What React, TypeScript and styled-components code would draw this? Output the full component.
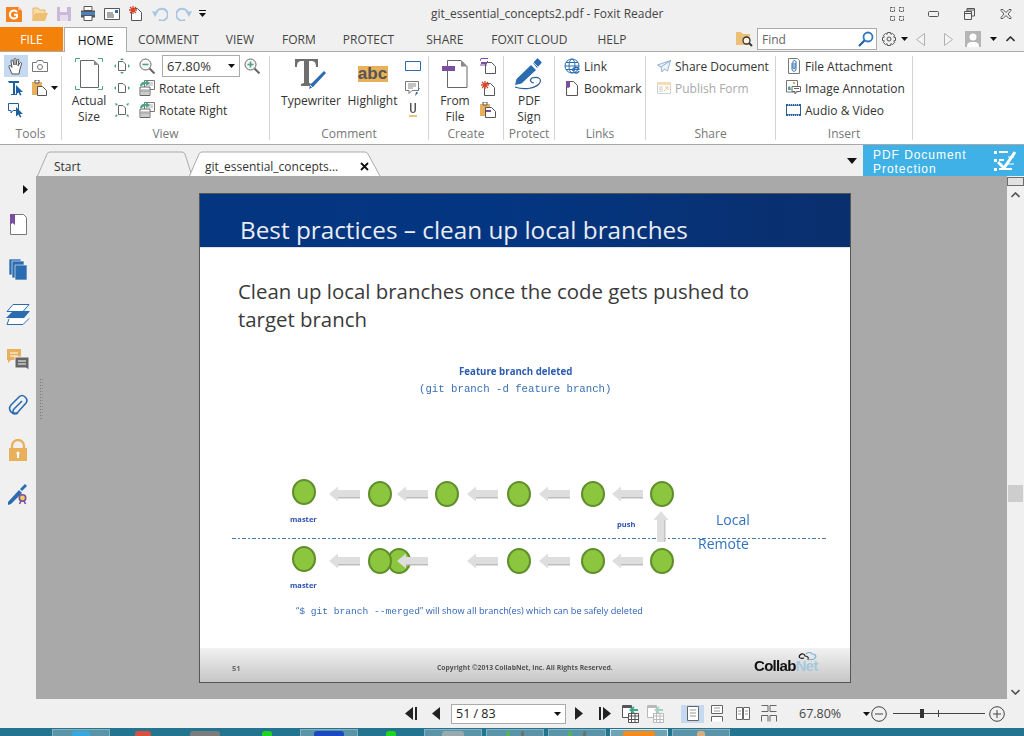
import React from "react";
import styled, { createGlobalStyle } from "styled-components";

const Global = createGlobalStyle`
  html, body { margin: 0; padding: 0; width: 1024px; height: 736px; overflow: hidden; background: #f0f0f0; }
  * { box-sizing: border-box; }
`;

const UI = `"Open Sans", "Noto Sans", sans-serif`;

const Shell = styled.div`
  width: 1024px; height: 736px; display: flex; flex-direction: column; overflow: hidden;
  background: #f0f0f0; font-family: ${UI}; font-size: 12px; color: #333;
`;
const Ico = styled.svg`display: block; flex-shrink: 0;`;
const Slot = styled.div<{ $ml?: number; $mr?: number }>`
  flex-shrink: 0; display: flex; align-items: center; margin-left: ${p => p.$ml ?? 0}px; margin-right: ${p => p.$mr ?? 0}px;
`;

/* title bar */
const TitleBar = styled.div`height: 27px; display: flex; align-items: center; padding-left: 6px; position: relative;`;
const TitleText = styled.div`
  position: absolute; left: 431px; top: 5px; font-size: 12px; line-height: 17px; color: #444; white-space: nowrap;
`;

/* menu */
const MenuBar = styled.div`height: 25px; display: flex; align-items: stretch; border-bottom: 1px solid #ababab;`;
const FileTab = styled.div`
  width: 63px; height: 24px; background: #f4820a; color: #fff; display: flex; align-items: center; justify-content: center;
  font-size: 12px;
`;
const HomeTab = styled.div`
  width: 63px; height: 25px; margin-left: 1px; background: #fff; border: 1px solid #ababab; border-bottom: none;
  display: flex; align-items: center; justify-content: center; color: #111; font-size: 12px; position: relative; z-index: 1;
`;
const MenuItem = styled.div<{ $ml: number }>`
  margin-left: ${p => p.$ml}px; display: flex; align-items: center; font-size: 12px; color: #444; white-space: nowrap;
`;
const MenuRight = styled.div`margin-left: auto; display: flex; align-items: center; height: 24px;`;
const FindBox = styled.div`
  width: 120px; height: 22px; border: 1px solid #ababab; background: #fff; margin-left: 4px; flex-shrink: 0;
  display: flex; align-items: center; justify-content: space-between; padding: 0 2px 0 4px; color: #666; font-size: 12px;
`;

/* ribbon */
const Ribbon = styled.div`height: 93px; background: #fff; display: flex; border-bottom: 1px solid #a8a8a8;`;
const Group = styled.section<{ $w: number }>`
  width: ${p => p.$w}px; height: 84px; margin-top: 4px; border-right: 1px solid #d4d4d4; display: flex; flex-direction: column; flex-shrink: 0;
`;
const GroupBody = styled.div<{ $pl?: number }>`
  height: 66px; margin-top: -1px; display: flex; flex-shrink: 0; padding-left: ${p => p.$pl ?? 0}px;
`;
const GroupLabel = styled.div`
  margin-top: 5px; line-height: 16px; height: 16px; flex-shrink: 0; text-align: center; color: #777; font-size: 12px;
`;
const Large = styled.div<{ $w: number; $ml?: number }>`
  width: ${p => p.$w}px; margin-left: ${p => p.$ml ?? 0}px; flex-shrink: 0; display: flex; flex-direction: column; align-items: center;
`;
const LargeIcon = styled.div`height: 38px; flex-shrink: 0; display: flex; align-items: center; justify-content: center;`;
const LargeText = styled.div`line-height: 16px; flex-shrink: 0; text-align: center; white-space: nowrap; color: #333;`;
const Col = styled.div<{ $ml?: number }>`
  display: flex; flex-direction: column; margin-left: ${p => p.$ml ?? 0}px; flex-shrink: 0;
`;
const Row = styled.div<{ $muted?: boolean }>`
  height: 22px; display: flex; align-items: center; gap: 4px; white-space: nowrap; color: ${p => (p.$muted ? "#a8a8a8" : "#333")};
`;
const ToolGrid = styled.div`
  display: grid; grid-template-columns: 24px 28px; grid-auto-rows: 22px; margin-left: 4px; gap: 0 4px;
`;
const ToolCell = styled.div<{ $on?: boolean; $left?: boolean }>`
  display: flex; align-items: center; justify-content: ${p => (p.$left ? "flex-start" : "center")};
  background: ${p => (p.$on ? "#c5d9f1" : "transparent")};
`;
const Combo = styled.div`
  width: 78px; height: 22px; border: 1px solid #ababab; display: flex; align-items: center; flex-shrink: 0;
  justify-content: space-between; padding: 0 4px 0 4px; font-size: 13px; color: #333;
`;

/* tab bar */
const TabBar = styled.div`height: 31px; display: flex; align-items: stretch; padding-left: 37px; overflow: hidden;`;
const DocTab = styled.div<{ $w: number; $ml?: number }>`
  width: ${p => p.$w}px; margin-left: ${p => p.$ml ?? 0}px; position: relative; flex-shrink: 0;
`;
const TabShape = styled.svg`position: absolute; left: 0; top: 0;`;
const TabLabel = styled.div<{ $l: number; $track?: number }>`
  position: absolute; left: ${p => p.$l}px; top: 13px; line-height: 17px; color: #333; white-space: nowrap; font-size: 12px;
  letter-spacing: ${p => p.$track ?? 0}px;
`;
const TabClose = styled.div`position: absolute; right: 10px; top: 17px;`;
const PromoBox = styled.div`
  width: 161px; flex-shrink: 0; background: #3fb1e7; color: #fff; padding: 2px 8px 0 10px; display: flex; justify-content: space-between;
  align-items: center; font-family: "Liberation Sans", sans-serif; font-size: 12px; line-height: 14px; letter-spacing: .95px;
`;

/* main */
const Main = styled.div`height: 523px; display: flex;`;
const Rail = styled.div`width: 36px; display: flex; flex-direction: column; align-items: center; flex-shrink: 0;`;
const RailCaret = styled.div`height: 26px; width: 100%; display: flex; justify-content: flex-end; align-items: center; padding: 0 8px 0 0;`;
const RailItem = styled.div`
  height: 45px; width: 100%; display: flex; align-items: center; justify-content: center;
`;
const Viewer = styled.div`flex: 1; background: #a9a9a9; padding: 17px 0 0 163px; position: relative;`;
const Grip = styled.div`
  position: absolute; left: 3px; top: 202px; width: 4px; height: 42px;
  background-image: radial-gradient(#6d6d6d 0.7px, transparent 0.8px); background-size: 2.7px 3px;
`;
const ScrollBar = styled.div`width: 17px; background: #f0f0f0; flex-shrink: 0; display: flex; flex-direction: column; align-items: center; position: relative;`;
const ScrollTop = styled.div`width: 17px; height: 9px; margin-top: 1px; background: #e2e2e2; border: 1px solid #6c6c6c;`;
const ScrollUp = styled.div`margin-top: 6px;`;
const ScrollThumb = styled.div`position: absolute; top: 309px; left: 1px; width: 15px; height: 17px; background: #cdcdcd;`;
const ScrollDown = styled.div`position: absolute; top: 513px; left: 4px;`;

/* page */
const Page = styled.div`
  width: 652px; height: 490px; background: #fff; border: 1px solid #555;
  display: flex; flex-direction: column; position: relative; font-family: "Open Sans", "Noto Sans", sans-serif;
`;
const SlideHead = styled.div`
  height: 54px; flex-shrink: 0; background: linear-gradient(90deg, #04357f 0%, #033682 45%, #0a2f6d 100%); color: #e9edf3;
  display: flex; align-items: flex-end; padding: 0 0 1px 40px; font-size: 24.3px; line-height: 33px; white-space: nowrap;
  border-bottom: 1px solid #dfe3ea;
`;
const SlideBody = styled.div`
  padding: 29px 0 0 38px; font-size: 20.4px; line-height: 28px; color: #3a3a3a; width: 580px;
`;
const Canvas = styled.div`position: absolute; left: -1px; top: -1px; width: 652px; height: 490px; filter: blur(0.3px);`;
const Spot = styled.div<{ $x: number; $y: number }>`
  position: absolute; left: ${p => p.$x}px; top: ${p => p.$y}px; white-space: nowrap;
`;
const Caption = styled(Spot)`color: #2c5cb0; font-weight: 700; font-size: 9.7px; line-height: 12px;`;
const MonoCaption = styled(Spot)`color: #3a6fb5; font-family: "Liberation Mono", monospace; font-size: 10.7px; line-height: 12px;`;
const Small = styled(Spot)`color: #2c50b0; font-weight: 700; font-size: 7.5px; line-height: 10px;`;
const Side = styled(Spot)`color: #2f72bd; font-size: 14px; line-height: 18px;`;
const Note = styled(Spot)`color: #2f62b8; font-size: 9.15px; line-height: 12px;`;
const NoteMono = styled.span`font-family: "Liberation Mono", monospace; font-size: 9.6px; color: #3a6fb5;`;
const Node = styled.div<{ $x: number; $y: number }>`
  position: absolute; left: ${p => p.$x - 12}px; top: ${p => p.$y - 13}px; width: 24px; height: 26px; border-radius: 50%;
  background: #8cc63f; border: 2px solid #5f8f2a;
`;
const Dash = styled.div`
  position: absolute; left: 33px; top: 345px; width: 594px; height: 1px;
  background: repeating-linear-gradient(90deg, #4a77ad 0 4px, transparent 4px 6px, #4a77ad 6px 8px, transparent 8px 10px);
`;
const SlideFoot = styled.div`
  position: absolute; left: 0; right: 0; bottom: 0; height: 34px; background: linear-gradient(#f2f2f2, #c6c6c6);
`;
const FootNum = styled(Spot)`font-size: 7.5px; font-weight: 700; color: #666; line-height: 10px;`;
const FootCopy = styled(Spot)`font-size: 6.8px; font-weight: 700; color: #555; line-height: 10px;`;
const LogoText = styled(Spot)`font-family: "Liberation Sans", sans-serif; font-weight: 700; font-size: 15px; letter-spacing: -.7px; color: #111; line-height: 18px;`;
const LogoNet = styled.span`color: #a3c8df;`;

/* status */
const Status = styled.div`height: 29px; display: flex; align-items: center; padding-left: 405px;`;
const PageBox = styled.div`
  margin-left: 11px; width: 115px; height: 20px; border: 1px solid #ababab; background: #fff; display: flex;
  align-items: center; justify-content: space-between; padding: 0 4px 0 4px; font-size: 12.5px; color: #222; flex-shrink: 0;
`;
const ViewBtn = styled.div<{ $on?: boolean; $ml: number }>`
  width: 23px; height: 18px; margin-left: ${p => p.$ml}px; display: flex; align-items: center; justify-content: center;
  background: ${p => (p.$on ? "#c5d9f1" : "transparent")}; flex-shrink: 0;
`;
const ZoomValue = styled.div`margin-left: 19px; width: 64px; font-size: 12.5px; color: #444; flex-shrink: 0;`;
const Slider = styled.div`width: 92px; height: 1px; background: #444; margin-left: 6px; position: relative; flex-shrink: 0;`;
const SliderThumb = styled.div`position: absolute; left: 27px; top: -4px; width: 4px; height: 9px; background: #333;`;
const SliderTick = styled.div`position: absolute; left: 45px; top: -3px; width: 1px; height: 7px; background: #444;`;

/* taskbar */
const Taskbar = styled.div`
  height: 8px; background: #23748f; display: grid; grid-template-columns: repeat(11, 58px); column-gap: 4px; padding: 1px 0 0 52px; overflow: hidden;
`;
const TaskBtn = styled.div<{ $state?: "open" | "active" }>`
  height: 10px; position: relative; display: flex; justify-content: center; gap: 11px;
  background: ${p => (p.$state === "active" ? "#6fa2b3" : p.$state === "open" ? "#5b94a8" : "transparent")};
  border: 1px solid ${p => (p.$state === "active" ? "#d7e6ea" : p.$state === "open" ? "#86b2c0" : "transparent")};
`;
const TaskGlyph = styled.div<{ $c: string; $w: number }>`
  width: ${p => p.$w}px; height: 12px; margin-top: 1px; background: ${p => p.$c}; border-radius: 3px 3px 0 0;
`;

/* ---------- drawings ---------- */
const Caret = ({ c = "#111" }: { c?: string }) => (
  <Ico width="7" height="4" viewBox="0 0 7 4"><path d="M0 0h7L3.5 4z" fill={c} /></Ico>
);
const BLUE = "#2b6cb0";
const OR = "#e8b05a";
const PUR = "#7b4f9e";
const GR = "#555";
const PageOutline = ({ x = 0.5, y = 0.5, w, h, c = GR, fold = 4 }: any) => (
  <path d={`M${x} ${y}H${x + w - fold}L${x + w} ${y + fold}V${y + h}H${x}Z`} fill="#fff" stroke={c} />
);

const AppLogo = () => (
  <Ico width="17" height="16" viewBox="0 0 17 16">
    <path d="M0 1h12l4 4v11H0z" fill="#f3831f" />
    <path d="M12 0l4 4h-4z" fill="#f7b98a" />
    <path d="M11 6a4 4 0 1 0 0 5V8.8H8" fill="none" stroke="#fff" strokeWidth="2" />
  </Ico>
);
const Folder = () => (
  <Ico width="16" height="14" viewBox="0 0 16 14">
    <path d="M1 14V1h5l2 2h5v3" fill="#f6dca8" stroke="#e3b56a" />
    <path d="M0 14l3-8h13l-3 8z" fill="#efc06f" />
  </Ico>
);
const Floppy = () => (
  <Ico width="14" height="14" viewBox="0 0 14 14">
    <path d="M0 0h14v14H0z" fill="#cbb7d8" />
    <path d="M3 0h7v5H3z" fill="#f0f0f0" /><path d="M3 8h8v6H3z" fill="#e6dced" />
  </Ico>
);
const Printer = () => (
  <Ico width="16" height="15" viewBox="0 0 16 15">
    <path d="M4 .5h8v4H4z" fill="#fff" stroke={GR} />
    <path d="M1 4.5h14v7H1z" fill="#555" /><path d="M1 6h14v3H1z" fill="#4b82bd" />
    <path d="M4 9.5h8v5H4z" fill="#fff" stroke={GR} />
  </Ico>
);
const Mail = () => (
  <Ico width="16" height="12" viewBox="0 0 16 12">
    <path d="M.5.5h15v11H.5z" fill="#fff" stroke={GR} />
    <path d="M3 5h6M3 7h7M3 9h7" stroke={GR} /><path d="M11 2h3v3h-3z" fill={BLUE} />
  </Ico>
);
const NewDoc = () => (
  <Ico width="15" height="15" viewBox="0 0 15 15">
    <PageOutline x={3.5} y={2.5} w={10} h={12} />
    <path d="M5 0v8M1 4h8M2 1l6 6M8 1L2 7" stroke="#d9452b" strokeWidth="1.3" />
  </Ico>
);
const Undo = ({ flip }: { flip?: boolean }) => (
  <Ico width="16" height="14" viewBox="0 0 16 14">
    <g transform={flip ? "matrix(-1 0 0 1 16 0)" : undefined}>
      <path d="M4 6a6 6 0 1 1 3 7" fill="none" stroke="#a9c6e2" strokeWidth="2" />
      <path d="M0 4l6 1-3 5z" fill="#a9c6e2" />
    </g>
  </Ico>
);
const QatMore = () => (
  <Ico width="7" height="7" viewBox="0 0 7 7"><path d="M0 0h7v1H0z" fill="#111" /><path d="M0 3h7L3.5 7z" fill="#111" /></Ico>
);
const WinGrid = () => (
  <Ico width="14" height="14" viewBox="0 0 14 14" fill="none" stroke="#555">
    <path d="M.5.5h4v4h-4zM9.500.5h4v4h-4zM.5 9.500h4v4h-4zM9.500 9.500h4v4h-4z" strokeDasharray="2 1" />
  </Ico>
);
const WinMin = () => <Ico width="11" height="6" viewBox="0 0 11 6"><rect x=".5" y=".5" width="10" height="5" rx="1" fill="none" stroke="#555" /></Ico>;
const WinMax = () => (
  <Ico width="11" height="12" viewBox="0 0 11 12" fill="none" stroke="#555">
    <path d="M3 3V.5h7.5V8H8" /><path d="M.5 3.5h7v8h-7z" /><path d="M.5 5.5h7M3 2h7" />
  </Ico>
);
const WinClose = () => (
  <Ico width="12" height="10" viewBox="0 0 12 10" fill="none" stroke="#555">
    <path d="M1 .5h2l3 3 3-3h2v1l-3 3.5 3 3.5v1H9l-3-3-3 3H1v-1l3-3.5-3-3.5z" />
  </Ico>
);
const FolderFind = () => (
  <Ico width="17" height="15" viewBox="0 0 17 15">
    <path d="M0 13V0h5l2 2h7v11z" fill="#edc077" />
    <circle cx="10.5" cy="8.5" r="3.5" fill="#fdf3df" stroke="#333" strokeWidth="1.3" />
    <path d="M13 11l3 3" stroke="#333" strokeWidth="1.8" />
  </Ico>
);
const FindGlass = () => (
  <Ico width="17" height="16" viewBox="0 0 17 16" fill="none">
    <circle cx="11" cy="6" r="4.5" stroke="#2f78bd" strokeWidth="1.8" />
    <path d="M7.5 9.5L2 15" stroke="#1f5f9e" strokeWidth="2.2" />
  </Ico>
);
const Gear = () => (
  <Ico width="14" height="14" viewBox="0 0 14 14" fill="none" stroke="#555">
    <circle cx="7" cy="7" r="2" />
    <path d="M5.5.5h3l.4 1.8 1.6-.9 2.1 2.1-.9 1.6 1.8.4v3l-1.8.4.9 1.6-2.1 2.1-1.6-.9-.4 1.8h-3l-.4-1.8-1.6.9L1.400 10.500l.9-1.600L.5 8.500v-3l1.800-.4-.9-1.600L3.500 1.400l1.600.9z" />
  </Ico>
);
const OutlineArrow = ({ right }: { right?: boolean }) => (
  <Ico width="9" height="13" viewBox="0 0 9 13">
    <path d={right ? "M.5.5l8 6-8 6z" : "M8.500.5l-8 6 8 6z"} fill="#f4f4f4" stroke="#b0b0b0" />
  </Ico>
);
const Avatar = () => (
  <Ico width="16" height="16" viewBox="0 0 16 16">
    <path d="M0 0h16v16H0z" fill="#b5b5b5" />
    <circle cx="8" cy="6" r="3.500" fill="#fff" /><path d="M2 16c0-5 3-5 6-5s6 0 6 5z" fill="#fff" />
  </Ico>
);
const ChevUp = ({ c = "#333", down }: { c?: string; down?: boolean }) => (
  <Ico width="9" height="6" viewBox="0 0 9 6">
    <path d={down ? "M.5 1l4 4 4-4" : "M.5 5l4-4 4 4"} fill="none" stroke={c} strokeWidth="1.600" />
  </Ico>
);
const Hand = () => (
  <Ico width="16" height="17" viewBox="0 0 16 17">
    <path d="M4 16L1 9c-.6-1.600 1-2 2-1l1 1.500L3 3c0-1.400 1.800-1.400 2 0l1 4V1.500c0-1.400 2-1.400 2 0V7l1-5c.3-1.300 2-1 1.800.3L10 8l1.800-3c.7-1.100 2.200-.4 1.700.9L12 11l-1 5z" fill="#fff" stroke="#555" />
  </Ico>
);
const Camera = () => (
  <Ico width="16" height="12" viewBox="0 0 16 12" fill="#fff" stroke="#777">
    <path d="M.5 2.500h4l1-2h5l1 2h4v9H.500z" /><circle cx="8" cy="7" r="2.500" />
  </Ico>
);
const ArrowTip = ({ x, y }: { x: number; y: number }) => (
  <path d={`M${x} ${y}l7 7h-3l1.500 3-1.500 .5-1.500-3-2.500 2z`} fill="#1f5f9e" />
);
const SelText = () => (
  <Ico width="16" height="16" viewBox="0 0 16 16">
    <path d="M0 1h11v2H7v11h2v1H3v-1h2V3H1z" fill="#1f5f9e" /><ArrowTip x={8} y={5} />
  </Ico>
);
const Clipboard = () => (
  <Ico width="16" height="16" viewBox="0 0 16 16">
    <path d="M0 2h10v13H0z" fill={OR} /><path d="M3 0h4v3H3z" fill="#fff" stroke={GR} />
    <PageOutline x={5.500} y={6.500} w={9} h={9} />
  </Ico>
);
const SelNote = () => (
  <Ico width="16" height="15" viewBox="0 0 16 15">
    <path d="M.5.500h10v7H5L3 10V7.500H.5z" fill="#fff" stroke="#1f5f9e" /><ArrowTip x={8} y={4} />
  </Ico>
);
const ActualSize = () => (
  <Ico width="28" height="32" viewBox="0 0 28 32">
    <path d="M.5 4V.5H5M23 .5h4.500V4M.5 28v3.500H5M23 31.500h4.500V28" fill="none" stroke="#4ca58a" />
    <path d="M5.500 2.500H19l4.500 4.500v22.500h-18z" fill="#fff" stroke="#666" />
    <path d="M19 2.500l4.500 4.500H19z" fill="#888" />
  </Ico>
);
const FitIcon = ({ kind }: { kind: number }) => (
  <Ico width="16" height="16" viewBox="0 0 16 16">
    <path d="M4.500 3.500H9l2.500 2.500v6.500h-7z" fill="#fff" stroke="#666" />
    {kind === 0 && <path d="M8 0l2 2H6zM8 16l-2-2h4zM0 8l2-2v4zM16 8l-2 2V6z" fill="#4ca58a" />}
    {kind === 1 && <path d="M0 8l2-2v4zM16 8l-2 2V6z" fill="#4ca58a" />}
    {kind === 2 && <path d="M1 1l3 1-2 2zM15 1l-1 3-2-2zM1 15l1-3 2 2zM15 15l-3-1 2-2z" fill="#4ca58a" />}
  </Ico>
);
const Magnify = ({ plus }: { plus?: boolean }) => (
  <Ico width="17" height="16" viewBox="0 0 17 16">
    <circle cx="6.500" cy="6.500" r="5.500" fill="#f7f7f7" stroke="#666" />
    <path d="M10.500 10.500l5 5" stroke="#666" strokeWidth="2" />
    <path d="M3.500 6.500h6" stroke="#4ca58a" strokeWidth="1.600" />
    {plus && <path d="M6.500 3.500v6" stroke="#4ca58a" strokeWidth="1.600" />}
  </Ico>
);
const Rotate = () => (
  <Ico width="16" height="16" viewBox="0 0 16 16">
    <path d="M5.500.5h10v9h-10z" fill="#fff" stroke="#777" />
    <path d="M7 3h7M7 5h7" stroke="#aaa" />
    <path d="M1 7h10v8.500H1z" fill="#fff" stroke="#666" />
    <path d="M3 9v6M5 9v6M7 9v6M9 9v6M1 11h10" stroke="#999" />
    <path d="M1 6c0-3 3-5 6-4V0l4 3-4 3V4C5 4 3.500 5 3 6z" fill="#4ca58a" />
  </Ico>
);
const Typewriter = () => (
  <Ico width="32" height="32" viewBox="0 0 32 32">
    <path d="M0 1h23v8h-2c0-4-1-6-5-6h-2v22l3 1v2H6v-2l3-1V3H7C3 3 2 5 2 9H0z" fill="#6e6e6e" />
    <path d="M29 13l2 2-13 14-4 2 1-4z" fill={BLUE} />
    <path d="M15 27l3 3" stroke="#fff" />
  </Ico>
);
const HighlightIcon = styled.div`
  width: 30px; height: 16px; background: ${OR}; color: #555; font-family: "Liberation Sans", sans-serif; font-weight: 700;
  font-size: 17px; line-height: 15px; text-align: center;
`;
const RectIcon = () => <Ico width="16" height="11" viewBox="0 0 16 11"><path d="M.5.500h15v9H.500z" fill="#fff" stroke={BLUE} /></Ico>;
const NotePin = () => (
  <Ico width="16" height="15" viewBox="0 0 16 15">
    <path d="M.5.500h13v9H7l-3 3v-3H.500z" fill="#fff" stroke="#777" />
    <path d="M3 3h8M3 5h8M3 7h5" stroke="#888" />
    <path d="M15 7l-3 4 1 1-3 3 1-4 1 0 2-4z" fill={BLUE} />
  </Ico>
);
const Underline = () => (
  <Ico width="10" height="14" viewBox="0 0 10 14">
    <path d="M2 0h1.500v7c0 2.500 3 2.500 3 0V0H8v7c0 4-6 4-6 0z" fill="#555" /><path d="M1 13h8" stroke={OR} strokeWidth="1.500" />
  </Ico>
);
const FromFile = () => (
  <Ico width="26" height="28" viewBox="0 0 26 28">
    <path d="M5.500.5H19l6 6v21H5.500z" fill="#fff" stroke="#666" /><path d="M19 .5l6 6h-6z" fill="#888" />
    <path d="M0 6h13v5H0z" fill={PUR} />
  </Ico>
);
const CreateA = () => (
  <Ico width="16" height="16" viewBox="0 0 16 16">
    <PageOutline x={5.500} y={4.500} w={10} h={11} />
    <path d="M1 .5h7M0 7h7" stroke={PUR} /><path d="M1 4h6v2H1z" fill={PUR} /><path d="M1 .5L0 3M7 3l1 1" stroke={PUR} />
  </Ico>
);
const CreateB = () => (
  <Ico width="15" height="15" viewBox="0 0 15 15">
    <PageOutline x={4.500} y={2.500} w={10} h={12} />
    <path d="M5 0v8M1 4h8M2 1l6 6M8 1L2 7" stroke="#d9452b" strokeWidth="1.300" />
  </Ico>
);
const CreateC = () => (
  <Ico width="16" height="16" viewBox="0 0 16 16">
    <path d="M0 2h10v12H0z" fill={OR} /><path d="M3 0h4v3H3z" fill="#fff" stroke={GR} />
    <PageOutline x={5.500} y={5.500} w={10} h={10} />
    <path d="M6 9h5" stroke={PUR} strokeWidth="2" />
  </Ico>
);
const PdfSign = () => (
  <Ico width="30" height="32" viewBox="0 0 30 32">
    <path d="M1 27l1.500-6L17 7l5 5L7.500 25.500z" fill={BLUE} />
    <path d="M19 5l4-4.500 1 0 3.500 3.500 0 1L23 10z" fill={BLUE} />
    <path d="M19 4l5 5" stroke="#fff" strokeWidth=".8" />
    <path d="M1 29c8 3 19 2 24-3 4-5-1-8-7-6-3 2-1 5 2 5" fill="none" stroke="#2b5f93" strokeWidth="1.200" />
  </Ico>
);
const Globe = () => (
  <Ico width="16" height="16" viewBox="0 0 16 16" fill="none" stroke={BLUE}>
    <circle cx="8" cy="8" r="7" fill="#fff" /><ellipse cx="8" cy="8" rx="3" ry="7" />
    <path d="M1 8h14M2 4.500h12M2 11.500h12" />
    <path d="M9 13a3 3 0 0 1 6-1M15 13a3 3 0 0 1-5 1" strokeWidth="1.500" />
  </Ico>
);
const Bookmark = () => (
  <Ico width="12" height="15" viewBox="0 0 12 15">
    <PageOutline x={.5} y={.5} w={11} h={14} />
    <path d="M0 0h4v6l-2 1-2-1z" fill={PUR} />
  </Ico>
);
const Send = () => (
  <Ico width="14" height="13" viewBox="0 0 14 13" fill="#eef3f8" stroke="#8fb1d3">
    <path d="M13.500.5L.5 5l3.500 2 1 5 2.500-3 3 2z" /><path d="M13.500.5L4 7" />
  </Ico>
);
const Publish = () => (
  <Ico width="14" height="12" viewBox="0 0 14 12">
    <path d="M.5.5h13v11H.500z" fill="#fff" stroke="#cfcfcf" /><path d="M0 0h14v3H0z" fill="#f3dcb9" />
    <path d="M2 5h4M2 7h4M2 9h4" stroke="#ccc" /><path d="M7 9l4-4m0 0H8m3 0v3" stroke="#f0c79a" />
  </Ico>
);
const Clip = () => (
  <Ico width="12" height="16" viewBox="0 0 12 16">
    <PageOutline x={.5} y={.5} w={11} h={15} c="#777" fold={2} />
    <path d="M4 5v6c0 3 4 3 4 0V4c0-2-3-2-3 0v6c0 1 2 1 2 0V5" fill="none" stroke={BLUE} />
  </Ico>
);
const ImageNote = () => (
  <Ico width="15" height="16" viewBox="0 0 15 16">
    <path d="M.5.500h11V12H.500z" fill="#fff" stroke="#777" />
    <path d="M2 10V7l2-1 1 4z" fill="#4ca58a" /><circle cx="8" cy="3" r="1.200" fill={OR} />
    <path d="M6 6.500h8.500v5h-4L9 14v-2.500H6z" fill="#fff" stroke="#666" /><path d="M8 8.500h5" stroke="#666" />
  </Ico>
);
const Film = () => (
  <Ico width="15" height="12" viewBox="0 0 15 12">
    <path d="M.5.500h14v11H.500z" fill="#fff" stroke="#2a5f9e" />
    <path d="M0 0h15v2H0zM0 10h15v2H0z" fill="#2a5f9e" /><path d="M2 .8h11M2 11.200h11" stroke="#fff" strokeDasharray="1 1" />
  </Ico>
);
const Checklist = () => (
  <Ico width="22" height="23" viewBox="0 0 22 23">
    <path d="M0 1h3v3H0zM0 9h3v3H0zM0 18h3v3H0z" fill="#fff" />
    <path d="M5 2h9M5 10h5M5 19h13" stroke="#fff" strokeWidth="2" />
    <path d="M4 12l6 6L21 2" fill="none" stroke="#fff" strokeWidth="3" />
    <path d="M14 7h6M14 14h6" stroke="#fff" />
  </Ico>
);
const RightCaret = () => <Ico width="5" height="9" viewBox="0 0 5 9"><path d="M0 0l5 4.500L0 9z" fill="#111" /></Ico>;
const RailPage = () => (
  <Ico width="17" height="21" viewBox="0 0 17 21">
    <PageOutline x={.5} y={.5} w={16} h={20} c="#777" fold={3} />
    <path d="M0 0h5v11l-2.500-2L0 11z" fill={PUR} />
  </Ico>
);
const RailPages = () => (
  <Ico width="18" height="21" viewBox="0 0 18 21" fill={BLUE} stroke="#fff" strokeWidth=".6">
    <path d="M0 0h12v16H0z" /><path d="M3 2h12v17H3z" /><path d="M6 6h12v15H6z" />
  </Ico>
);
const RailLayers = () => (
  <Ico width="24" height="21" viewBox="0 0 24 21">
    <path d="M7 .5h16l-6 7H1z" fill="#fff" stroke={BLUE} />
    <path d="M3 15l-2 5.500h16l6-6" fill="#fff" stroke={BLUE} />
    <path d="M7 7h17l-6 7H0z" fill={BLUE} />
  </Ico>
);
const RailComments = () => (
  <Ico width="23" height="22" viewBox="0 0 23 22">
    <path d="M0 0h14v11H4l-3 3v-3H0z" fill={OR} /><path d="M3 4h8M3 7h8" stroke="#fff" />
    <path d="M8 8h14v13l-3-2H8z" fill="#666" stroke="#f0f0f0" /><path d="M11 12h8M11 15h8" stroke="#fff" />
  </Ico>
);
const RailClip = () => (
  <Ico width="20" height="22" viewBox="0 0 20 22" fill="none" stroke={BLUE} strokeWidth="1.600">
    <path d="M14 8L6 16c-3 3 1 6 4 3L18 10c3-4-3-10-7-6L3 12c-4 5 2 11 7 8" transform="translate(0 -1)" />
  </Ico>
);
const RailLock = () => (
  <Ico width="18" height="22" viewBox="0 0 18 22">
    <path d="M3 10V7a6 6 0 0 1 12 0v3" fill="none" stroke={OR} strokeWidth="2.400" />
    <path d="M0 9h18v13H0z" fill={OR} />
    <circle cx="9" cy="14" r="1.600" fill="#fff" /><path d="M8 14h2v5H8z" fill="#fff" />
  </Ico>
);
const RailPen = () => (
  <Ico width="20" height="21" viewBox="0 0 20 21">
    <path d="M0 18L11 6l3 3L3 20l-3 1z" fill={BLUE} /><path d="M12 5l5-5 2 2-5 5z" fill={BLUE} />
    <circle cx="14.500" cy="14" r="3.200" fill="#f1cf5c" stroke={PUR} strokeWidth="1.600" />
    <path d="M11.500 20l2-4M17.500 20l-2-4" stroke={PUR} strokeWidth="1.600" />
  </Ico>
);
const Nav = ({ dir, dbl }: { dir: "l" | "r"; dbl?: boolean }) => (
  <Ico width={dbl ? 13 : 8} height="13" viewBox={dbl ? "0 0 13 13" : "0 0 8 13"}>
    {dbl
      ? dir === "l"
        ? <path d="M8 0v13L0 6.500zM10 0h2v13h-2z" fill="#222" />
        : <path d="M5 0v13l8-6.500zM1 0h2v13H1z" fill="#222" />
      : dir === "l"
        ? <path d="M8 0v13L0 6.500z" fill="#222" />
        : <path d="M0 0v13l8-6.500z" fill="#222" />}
  </Ico>
);
const Sheet = ({ faded }: { faded?: boolean }) => {
  const c = faded ? "#b9b9b9" : "#555";
  const a = faded ? "#a5cfc2" : "#3aa58a";
  return (
    <Ico width="17" height="18" viewBox="0 0 17 18">
      <path d="M.5.500h9v12h-9z" fill="#fff" stroke={c} />
      <path d="M1 2h8" stroke={c} strokeWidth="2" />
      <path d="M6.500 8.500h10v9h-10z" fill="#fff" stroke={c} />
      <path d="M6 11h11M9.500 9v9M13 9v9M6.500 14.500h10" stroke={c} />
      <path d="M16 5H9M12 2L8.500 5 12 8" fill="none" stroke={a} strokeWidth="1.800" />
    </Ico>
  );
};
const ViewPage = ({ kind }: { kind: number }) => (
  <Ico width="16" height="17" viewBox="0 0 16 17" fill="#fff" stroke="#666">
    {kind === 0 && <><path d="M2.500 1.500h11v14h-11z" /><path d="M5 5h6M5 8h6M5 11h6" stroke="#999" /></>}
    {kind === 1 && <><path d="M2.500.5h11v8h-11zM2.500 16.500v-5h11v5" /><path d="M5 3h6M5 6h6" stroke="#999" /></>}
    {kind === 2 && <><path d="M1.500 2.500h6v12h-6zM8.500 2.500h6v12h-6z" /><path d="M3 6h3M3 9h3M10 6h3M10 9h3" stroke="#999" /></>}
    {kind === 3 && <path d="M.5.500H7v6H.500M15.500.500H9v6h6.500M.5 16.500V10.500H7v6M15.500 16.500V10.500H9v6" fill="none" />}
  </Ico>
);
const RoundBtn = ({ plus }: { plus?: boolean }) => (
  <Ico width="16" height="16" viewBox="0 0 16 16" fill="none" stroke="#444">
    <circle cx="8" cy="8" r="7.300" />
    <path d="M4 8h8" />{plus && <path d="M8 4v8" />}
  </Ico>
);
const BlockArrow = () => (
  <Ico width="32" height="16" viewBox="0 0 32 16">
    <path d="M31 4H9V.5L0 8l9 7.500V12h22z" fill="#dedede" />
    <path d="M9 11h22v1.500H9z" fill="#bdbdbd" />
  </Ico>
);
const BlockArrowUp = () => (
  <Ico width="16" height="32" viewBox="0 0 16 32">
    <path d="M4 31V9H.5L8 0l7.500 9H12v22z" fill="#dedede" />
    <path d="M11 9h1.500v22H11z" fill="#c6c6c6" />
  </Ico>
);
const Cloud = () => (
  <Ico width="22" height="12" viewBox="0 0 22 12" fill="none">
    <path d="M8 6C4 7 2 5 4 3c2-2 5-1 5 1 3 0 4 2 3 4" stroke="#111" strokeWidth="1.200" />
    <path d="M10 2c2-2 5-2 6 0 3 0 5 2 3 4-1 2-5 2-7 1" stroke="#7fb2d4" strokeWidth="1.200" />
  </Ico>
);

const xsTop = [[329, 494], [397, 494], [467, 494], [539, 494], [612, 494], [329, 561], [467, 561], [539, 561], [612, 561]];
const circles = [[304, 492], [380, 494], [447, 494], [519, 494], [593, 494], [662, 494], [304, 559], [399, 561], [380, 561], [519, 561], [593, 561], [662, 561]];

export default function App() {
  return (
    <Shell>
      <Global />
      <TitleBar>
        <AppLogo />
        <Slot $ml={9}><Folder /></Slot>
        <Slot $ml={9}><Floppy /></Slot>
        <Slot $ml={9}><Printer /></Slot>
        <Slot $ml={8}><Mail /></Slot>
        <Slot $ml={8}><NewDoc /></Slot>
        <Slot $ml={9}><Undo /></Slot>
        <Slot $ml={8}><Undo flip /></Slot>
        <Slot $ml={7}><QatMore /></Slot>
        <TitleText>git_essential_concepts2.pdf - Foxit Reader</TitleText>
        <Slot $ml={684}><WinGrid /></Slot>
        <Slot $ml={24}><WinMin /></Slot>
        <Slot $ml={25}><WinMax /></Slot>
        <Slot $ml={25}><WinClose /></Slot>
      </TitleBar>

      <MenuBar>
        <FileTab>FILE</FileTab>
        <HomeTab>HOME</HomeTab>
        <MenuItem $ml={11}>COMMENT</MenuItem>
        <MenuItem $ml={27}>VIEW</MenuItem>
        <MenuItem $ml={28}>FORM</MenuItem>
        <MenuItem $ml={27}>PROTECT</MenuItem>
        <MenuItem $ml={32}>SHARE</MenuItem>
        <MenuItem $ml={28}>FOXIT CLOUD</MenuItem>
        <MenuItem $ml={30}>HELP</MenuItem>
        <MenuRight>
          <FolderFind />
          <FindBox>Find<FindGlass /></FindBox>
          <Slot $ml={5}><Gear /></Slot>
          <Slot $ml={5}><Caret /></Slot>
          <Slot $ml={8}><OutlineArrow /></Slot>
          <Slot $ml={19}><OutlineArrow right /></Slot>
          <Slot $ml={12}><Avatar /></Slot>
          <Slot $ml={9}><Caret /></Slot>
          <Slot $ml={9} $mr={9}><ChevUp /></Slot>
        </MenuRight>
      </MenuBar>

      <Ribbon>
        <Group $w={62}>
          <GroupBody>
            <ToolGrid>
              <ToolCell $on><Hand /></ToolCell>
              <ToolCell $left><Camera /></ToolCell>
              <ToolCell><SelText /></ToolCell>
              <ToolCell $left><Clipboard /><Slot $ml={3}><Caret /></Slot></ToolCell>
              <ToolCell><SelNote /></ToolCell>
            </ToolGrid>
          </GroupBody>
          <GroupLabel>Tools</GroupLabel>
        </Group>
        <Group $w={208}>
          <GroupBody>
            <Large $w={54}>
              <LargeIcon><ActualSize /></LargeIcon>
              <LargeText>Actual</LargeText>
              <LargeText>Size</LargeText>
            </Large>
            <Col $ml={-2}>
              <Row><FitIcon kind={0} /></Row>
              <Row><FitIcon kind={1} /></Row>
              <Row><FitIcon kind={2} /></Row>
            </Col>
            <Col $ml={9}>
              <Row>
                <Magnify />
                <Slot $ml={2}><Combo>67.80%<Caret /></Combo></Slot>
                <Magnify plus />
              </Row>
              <Row><Rotate />Rotate Left</Row>
              <Row><Rotate />Rotate Right</Row>
            </Col>
          </GroupBody>
          <GroupLabel>View</GroupLabel>
        </Group>
        <Group $w={159}>
          <GroupBody $pl={11}>
            <Large $w={60}>
              <LargeIcon><Typewriter /></LargeIcon>
              <LargeText>Typewriter</LargeText>
            </Large>
            <Large $w={47} $ml={8}>
              <LargeIcon><HighlightIcon>abc</HighlightIcon></LargeIcon>
              <LargeText>Highlight</LargeText>
            </Large>
            <Col $ml={9}>
              <Row><RectIcon /></Row>
              <Row><NotePin /></Row>
              <Row><Slot $ml={3}><Underline /></Slot></Row>
            </Col>
          </GroupBody>
          <GroupLabel>Comment</GroupLabel>
        </Group>
        <Group $w={75}>
          <GroupBody>
            <Large $w={52}>
              <LargeIcon><FromFile /></LargeIcon>
              <LargeText>From</LargeText>
              <LargeText>File</LargeText>
            </Large>
            <Col $ml={-1}>
              <Row><CreateA /></Row>
              <Row><CreateB /></Row>
              <Row><CreateC /></Row>
            </Col>
          </GroupBody>
          <GroupLabel>Create</GroupLabel>
        </Group>
        <Group $w={51}>
          <GroupBody>
            <Large $w={50}>
              <LargeIcon><PdfSign /></LargeIcon>
              <LargeText>PDF</LargeText>
              <LargeText>Sign</LargeText>
            </Large>
          </GroupBody>
          <GroupLabel>Protect</GroupLabel>
        </Group>
        <Group $w={91}>
          <GroupBody $pl={9}>
            <Col>
              <Row><Globe />Link</Row>
              <Row><Slot $ml={2} $mr={2}><Bookmark /></Slot>Bookmark</Row>
            </Col>
          </GroupBody>
          <GroupLabel>Links</GroupLabel>
        </Group>
        <Group $w={130}>
          <GroupBody $pl={11}>
            <Col>
              <Row><Send />Share Document</Row>
              <Row $muted><Publish />Publish Form</Row>
            </Col>
          </GroupBody>
          <GroupLabel>Share</GroupLabel>
        </Group>
        <Group $w={137}>
          <GroupBody $pl={10}>
            <Col>
              <Row><Slot $ml={2} $mr={1}><Clip /></Slot>File Attachment</Row>
              <Row><ImageNote />Image Annotation</Row>
              <Row><Film />Audio &amp; Video</Row>
            </Col>
          </GroupBody>
          <GroupLabel>Insert</GroupLabel>
        </Group>
      </Ribbon>

      <TabBar>
        <DocTab $w={152}>
          <TabShape width="156" height="31" viewBox="0 0 156 31">
            <path d="M.5 31L10 9q1-2 3-2H145q2 0 3 2L155 31" fill="#f0f0f0" stroke="#aaa" />
          </TabShape>
          <TabLabel $l={17}>Start</TabLabel>
        </DocTab>
        <DocTab $w={190}>
          <TabShape width="192" height="31" viewBox="0 0 192 31">
            <path d="M.5 31L10 9q1-2 3-2H176q2 0 3 2L191 31" fill="#fff" stroke="#aaa" />
          </TabShape>
          <TabLabel $l={16}>git_essential_concepts...</TabLabel>
          <TabClose>
            <Ico width="9" height="9" viewBox="0 0 9 9"><path d="M1 1l7 7M8 1L1 8" stroke="#111" strokeWidth="1.800" /></Ico>
          </TabClose>
        </DocTab>
        <Slot $ml={468} $mr={6}>
          <Ico width="10" height="6" viewBox="0 0 10 6"><path d="M0 0h10L5 6z" fill="#111" /></Ico>
        </Slot>
        <PromoBox>
          <div>PDF Document<br />Protection</div>
          <Checklist />
        </PromoBox>
      </TabBar>

      <Main>
        <Rail>
          <RailCaret><RightCaret /></RailCaret>
          <RailItem><RailPage /></RailItem>
          <RailItem><RailPages /></RailItem>
          <RailItem><RailLayers /></RailItem>
          <RailItem><RailComments /></RailItem>
          <RailItem><RailClip /></RailItem>
          <RailItem><RailLock /></RailItem>
          <RailItem><RailPen /></RailItem>
        </Rail>
        <Viewer>
          <Grip />
          <Page>
            <SlideHead>Best practices – clean up local branches</SlideHead>
            <SlideBody>Clean up local branches once the code gets pushed to target branch</SlideBody>
            <SlideFoot />
            <Canvas>
              <Caption $x={260} $y={173}>Feature branch deleted</Caption>
              <MonoCaption $x={220} $y={190}>(git branch -d feature branch)</MonoCaption>
              <Dash />
              {circles.map(([x, y], i) => <Node key={i} $x={x - 199} $y={y - 193} />)}
              {xsTop.map(([x, y], i) => <Spot key={i} $x={x - 199} $y={y - 201}><BlockArrow /></Spot>)}
              <Spot $x={198} $y={360}><BlockArrow /></Spot>
              <Spot $x={454} $y={318}><BlockArrowUp /></Spot>
              <Small $x={91} $y={321}>master</Small>
              <Small $x={91} $y={387}>master</Small>
              <Small $x={418} $y={326}>push</Small>
              <Side $x={517} $y={318}>Local</Side>
              <Side $x={499} $y={342}>Remote</Side>
              <Note $x={97} $y={412}>
                “<NoteMono>$ git branch --merged</NoteMono>” will show all branch(es) which can be safely deleted
              </Note>
              <FootNum $x={33} $y={470}>51</FootNum>
              <FootCopy $x={238} $y={470}>Copyright ©2013 CollabNet, Inc.  All Rights Reserved.</FootCopy>
              <LogoText $x={555} $y={464}>Collab<LogoNet>Net</LogoNet></LogoText>
              <Spot $x={597} $y={459}><Cloud /></Spot>
            </Canvas>
          </Page>
        </Viewer>
        <ScrollBar>
          <ScrollTop />
          <ScrollUp><ChevUp c="#555" /></ScrollUp>
          <ScrollThumb />
          <ScrollDown><ChevUp c="#555" down /></ScrollDown>
        </ScrollBar>
      </Main>

      <Status>
        <Nav dir="l" dbl />
        <Slot $ml={14}><Nav dir="l" /></Slot>
        <PageBox>51 / 83<Caret /></PageBox>
        <Slot $ml={9}><Nav dir="r" /></Slot>
        <Slot $ml={15}><Nav dir="r" dbl /></Slot>
        <Slot $ml={11}><Sheet /></Slot>
        <Slot $ml={8}><Sheet faded /></Slot>
        <ViewBtn $on $ml={17}><ViewPage kind={0} /></ViewBtn>
        <ViewBtn $ml={1}><ViewPage kind={1} /></ViewBtn>
        <ViewBtn $ml={3}><ViewPage kind={2} /></ViewBtn>
        <ViewBtn $ml={3}><ViewPage kind={3} /></ViewBtn>
        <ZoomValue>67.80%</ZoomValue>
        <Caret />
        <Slot $ml={1}><RoundBtn /></Slot>
        <Slider><SliderThumb /><SliderTick /></Slider>
        <Slot $ml={4}><RoundBtn plus /></Slot>
      </Status>

      <Taskbar>
        <TaskBtn $state="open"><TaskGlyph $c="#39a8e0" $w={18} /></TaskBtn>
        <TaskBtn><TaskGlyph $c="#d9503f" $w={16} /></TaskBtn>
        <TaskBtn><TaskGlyph $c="#7c7c7c" $w={30} /></TaskBtn>
        <TaskBtn><TaskGlyph $c="#22d422" $w={10} /></TaskBtn>
        <TaskBtn $state="open"><TaskGlyph $c="#1c49c2" $w={30} /></TaskBtn>
        <TaskBtn><TaskGlyph $c="#22d422" $w={10} /></TaskBtn>
        <TaskBtn $state="open"><TaskGlyph $c="#9aa9ae" $w={22} /></TaskBtn>
        <TaskBtn $state="open"><TaskGlyph $c="#57b15a" $w={4} /><TaskGlyph $c="#6e6e6e" $w={3} /></TaskBtn>
        <TaskBtn $state="open"><TaskGlyph $c="#57b15a" $w={4} /><TaskGlyph $c="#6e6e6e" $w={3} /></TaskBtn>
        <TaskBtn $state="active"><TaskGlyph $c="#f58a1d" $w={32} /></TaskBtn>
        <TaskBtn $state="open"><TaskGlyph $c="#d9ad80" $w={8} /></TaskBtn>
      </Taskbar>
    </Shell>
  );
}
